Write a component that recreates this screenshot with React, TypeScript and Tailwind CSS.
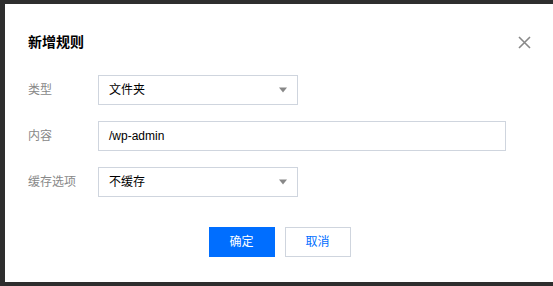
import React from 'react';

const FONT = { fontFamily: '"Liberation Sans", "Noto Sans CJK SC", sans-serif' };

const Caret: React.FC = () => (
  <svg width="10" height="6" viewBox="0 0 10 6" className="text-[#888]">
    <path d="M1 0.5h8L5 5.5z" fill="currentColor" />
  </svg>
);

const SelectBox: React.FC<{ value: string }> = ({ value }) => (
  <div className="flex h-[30px] w-[200px] items-center justify-between border border-[#cfd5de] bg-white pl-[10px] pr-[9px] text-[12px] text-[#000]">
    <span>{value}</span>
    <Caret />
  </div>
);

const FormRow: React.FC<{ label: string; children: React.ReactNode }> = ({ label, children }) => (
  <div className="flex items-center">
    <div className="w-[70px] text-[12px] text-[#888]">{label}</div>
    {children}
  </div>
);

export default function App() {
  return (
    <div className="flex h-[286px] w-[553px] bg-[#2e2e2e] pb-[4px] pl-[5px] pt-[4px]" style={FONT}>
      <div className="flex flex-1 flex-col bg-white pl-[23px] pt-[28px]">
        {/* header */}
        <div className="flex h-[20px] items-center justify-between pr-[22px]">
          <h3 className="text-[14px] font-bold text-[#000]">新增规则</h3>
          <button className="flex h-[14px] w-[14px] items-center justify-center">
            <svg width="13" height="13" viewBox="0 0 13 13">
              <path d="M1 1L12 12M12 1L1 12" stroke="#888" strokeWidth="1.6" />
            </svg>
          </button>
        </div>

        {/* form */}
        <div className="mt-[23px] flex flex-col gap-[16px]">
          <FormRow label="类型">
            <SelectBox value="文件夹" />
          </FormRow>
          <FormRow label="内容">
            <div className="flex h-[30px] w-[408px] items-center border border-[#cfd5de] pl-[10px] text-[12px] text-[#000]">
              /wp-admin
            </div>
          </FormRow>
          <FormRow label="缓存选项">
            <SelectBox value="不缓存" />
          </FormRow>
        </div>

        {/* footer */}
        <div className="mt-[30px] flex justify-center gap-[10px] pr-[22px]">
          <button className="h-[30px] w-[66px] bg-[#006eff] text-[12px] text-white">确定</button>
          <button className="h-[30px] w-[66px] border border-[#cfd5de] bg-white text-[12px] text-[#006eff]">
            取消
          </button>
        </div>
      </div>
    </div>
  );
}
